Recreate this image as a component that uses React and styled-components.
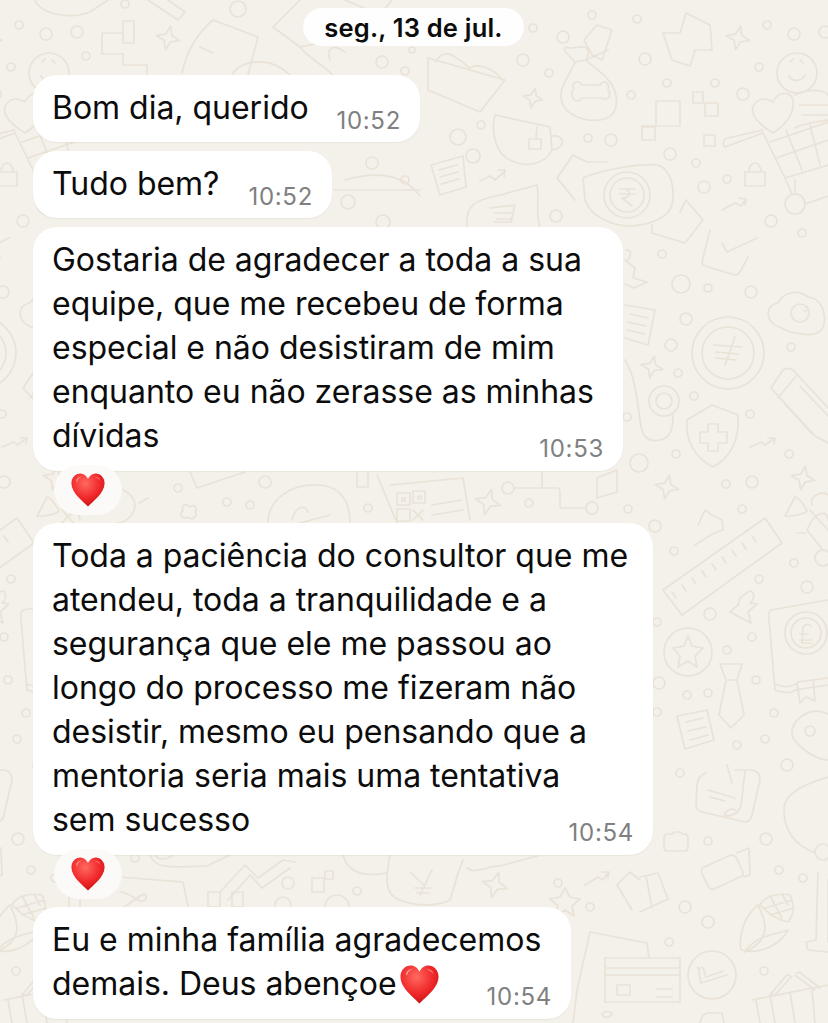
import React from "react";
import styled, { createGlobalStyle } from "styled-components";

const Global = createGlobalStyle`
  html, body { margin: 0; padding: 0; background: #f4f0ea; }
  #root { width: 828px; height: 1023px; overflow: hidden; }
`;

const Page = styled.main`
  position: relative;
  width: 828px;
  height: 1023px;
  overflow: hidden;
  background: #f4f0ea;
  font-family: Inter, "Liberation Sans", sans-serif;
  color: #0c0c0c;
`;

const Wallpaper = styled.svg`
  position: absolute;
  inset: 0;
  width: 828px;
  height: 1023px;
  fill: none;
  stroke: #e9e2d7;
  stroke-width: 1.7;
  stroke-linecap: round;
  stroke-linejoin: round;
  filter: blur(0.4px);
`;

const Thread = styled.div`
  position: relative;
  display: flex;
  flex-direction: column;
  align-items: flex-start;
  gap: 9px;
  padding: 8px 0 0 33px;
`;

const DateChip = styled.div`
  align-self: flex-start;
  margin: 0 0 20px 270px;
  width: 221px;
  height: 38px;
  border-radius: 19px;
  background: rgba(255, 255, 255, 0.93);
  display: flex;
  align-items: center;
  justify-content: center;
  font-size: 25.5px;
  font-weight: 600;
  letter-spacing: 0.2px;
`;

const Bubble = styled.div`
  box-sizing: border-box;
  width: ${(p) => p.$width}px;
  padding: ${(p) => (p.$single ? "11px 19px 12px" : "11px 19px 13px")};
  border-radius: 24px;
  background: #fff;
  box-shadow: 0 1px 1px rgba(120, 110, 90, 0.08);
  font-size: 32px;
  line-height: 44px;
  letter-spacing: -0.02px;
`;

const Line = styled.div`
  white-space: nowrap;
`;

const LastRow = styled.div`
  display: flex;
  justify-content: space-between;
  align-items: flex-end;
  white-space: nowrap;
`;

const InlineGroup = styled.span`
  display: inline-flex;
  align-items: center;
  gap: 3px;
`;

const Time = styled.span`
  font-size: 24px;
  line-height: 24px;
  letter-spacing: 0.7px;
  color: #808080;
  margin-bottom: -3px;
`;

const Reaction = styled.div`
  position: relative;
  z-index: 1;
  width: 68px;
  height: 50px;
  margin: -15px 0 -1px 21px;
  border-radius: 25px;
  background: #fbfaf8;
  display: flex;
  align-items: center;
  justify-content: center;
`;

const HeartSvg = styled.svg`
  display: block;
  flex: none;
  width: ${(p) => p.$size}px;
  height: ${(p) => p.$size}px;
`;

const Heart = ({ size, id }) => (
  <HeartSvg $size={size} viewBox="0 0 32 32">
    <defs>
      <radialGradient id={id} cx="0.42" cy="0.3" r="0.8">
        <stop offset="0" stopColor="#ff6a60" />
        <stop offset="0.55" stopColor="#f0282a" />
        <stop offset="1" stopColor="#bd0f10" />
      </radialGradient>
    </defs>
    <path
      d="M16 31.6C11.5 26.6.4 19 .4 9.6.4 4.2 4.2.4 8.8.4c3.2 0 5.8 2 7.2 5.2C17.4 2.4 20 .4 23.2.4c4.6 0 8.4 3.8 8.4 9.2 0 9.4-11.1 17-15.6 22z"
      fill={`url(#${id})`}
    />
    <path d="M5 7c1-2.4 3-3.6 5-3.4C7.8 4.4 6.4 5.8 5.8 8.4 5.4 8.6 4.9 8 5 7z" fill="#ffb0a8" opacity="0.8" />
    <path d="M22 3.6c2.6-.4 5 1 5.6 3.8-1.4-1.8-3.2-2.8-5.6-3.8z" fill="#ff9d94" opacity="0.7" />
  </HeartSvg>
);

const spark = (cx, cy, r, rot = 12) => {
  const p = [];
  for (let i = 0; i < 8; i++) {
    const a = ((rot + i * 45) * Math.PI) / 180;
    const rr = i % 2 ? r * 0.38 : r;
    p.push(`${(cx + Math.cos(a) * rr).toFixed(1)} ${(cy + Math.sin(a) * rr).toFixed(1)}`);
  }
  return `M${p.join("L")}Z`;
};

const circles = [
  [86,56,4],[125,4,4],[238,9,8],[382,62,6],[405,71,4],[412,50,3],[372,163,6],[405,180,4],[348,202,7],[383,222,7],
  [533,28,4],[563,37,6],[592,15,4],[637,19,4],[645,59,6],[523,60,6],[549,73,4],[667,83,4],[715,83,4],[631,95,4],
  [743,94,6],[767,25,4],[794,34,6],[825,32,6],[759,67,4],[458,137,8],[481,125,4],[473,156,7],[588,138,4],[611,140,6],
  [670,154,6],[696,163,4],[704,187,6],[727,179,4],[556,216,6],[771,221,6],[802,233,4],[662,254,4],
  [681,284,9],[708,288,4],[751,292,6],[686,319,6],[671,345,6],[791,347,4],[678,373,4],[694,396,4],[750,414,4],[627,417,4],
  [676,454,4],[789,454,4],[639,463,9],[752,482,6],[726,484,4],[628,509,4],[742,509,4],[655,526,6],
  [674,551,4],[794,563,4],[807,587,6],[759,579,4],[710,614,6],[752,637,4],[727,650,4],[657,622,4],[756,680,4],[659,683,6],
  [687,695,4],[708,693,4],[657,712,4],[774,713,4],[765,739,4],[737,745,4],[787,765,6],[680,773,4],
  [708,841,4],[766,839,6],[779,870,4],[803,878,4],[685,907,6],[708,922,6],[669,942,4],[764,971,4],
  [178,488,4],[265,482,6],[227,502,4],[250,505,4],[368,508,4],[529,503,4],[508,488,6],[592,508,6],
  [135,858,4],[288,883,6],[357,891,4],[558,883,4],[590,907,4],[283,905,8],[337,907,12],
  [795,204,10],[728,353,36],[728,353,26],[664,401,15],[664,401,8],[688,652,24],[806,633,21],[806,633,15],[810,731,5],
  [823,558,8],[800,313,9],[712,975,24],[823,852,8],[627,195,23],[627,195,17],[797,73,20],
];

const paths = [
  "M35 0C40 14 70 20 90 12L108 0","M148 0L178 20L185 12L168 0","M102 33H123V21H134V43H123V33M102 33V54H123V65H147V75",
  spark(168,38,12),"M182 73C186 55 195 35 213 20L258 37L248 75","M200 47L213 53","M232 75C240 60 270 55 290 75",
  "M273 27L300 0M273 27L300 47L325 42","M345 0L380 15L392 0","M330 60C326 50 332 42 345 52",
  "M300 47C310 60 320 62 333 75","M335 190H420M345 180C380 170 405 176 420 196",
  "M428 58L505 80L480 112L428 90Z","M436 62C440 52 450 52 456 58C462 60 466 66 470 68C478 62 496 70 502 80",
  "M575 62C570 75 560 85 561 97C562 115 585 122 600 120C618 118 620 100 612 85C605 73 590 65 586 60",
  "M575 62C568 55 562 50 566 47C572 50 578 46 585 47C590 50 588 58 586 60Z",
  "M574 88C570 84 578 78 582 85H600C604 78 610 84 608 90C612 94 608 102 602 98H582C576 106 568 96 574 88Z",
  "M597 25L612 30L602 60L592 55L584 40ZM586 60L608 50",
  "M663 33L680 33L686 13L710 25L712 50L695 50L690 66L672 60Z",spark(738,38,12),spark(533,98,10),
  "M495 115L550 127L552 150C545 165 525 168 510 160C498 155 490 135 495 115Z","M529 139H541V149H529ZM536 139L537 127",
  "M552 136C565 134 567 148 552 150",
  "M642 127H655V140H642ZM656 126V101H680V126H642","M693 92H703V103H693ZM705 103H718V116H705ZM704 135H715V146H704Z",
  "M789 76c3 6 13 6 16-1M790 62l3-3M800 60l3 3",
  "M773 133C760 125 750 115 753 107C757 98 765 97 773 102C777 92 790 90 793 100C795 115 785 125 773 133Z",
  "M795 95C810 88 825 90 828 95M795 128C800 125 815 122 828 120M800 105H828M802 115H828",
  "M725 147L763 133M725 147C722 143 724 138 728 138L763 130","M763 133L785 178L828 165M770 142L828 122M776 158L828 140M786 130L802 170M810 125L820 165",
  "M785 178L792 194M795 194V180M805 204L828 196",
  "M745 172H765V186H745ZM749 172C749 160 761 160 761 172",
  "M431 165L463 156L466 187L440 195ZM439 170L457 165M440 177L458 172M441 184L459 179",
  "M480 181L490 176L495 180L505 171M498 170L505 170L504 177","M722 210L735 203L741 206L746 199M739 198L746 199L745 205",
  "M583 178C600 170 640 163 658 165C672 170 675 190 672 205C668 218 650 225 630 226C610 226 590 215 585 200Z",
  "M620 189H635M620 194H635M624 189C632 190 631 198 622 198L632 206",
  "M557 178L573 155L587 162H607M557 178L575 200",
  "M652 225V233L685 243L703 220L686 200L680 212",
  "M467 227C465 205 475 200 500 195L537 185C540 200 535 215 540 227",
  "M490 208L515 205L511 222H494M495 213H513M497 219H512",
  "M710 230L702 262Q702 265 705 266L735 275Q738 275 740 272L748 257","M722 243L727 252L757 238",
  "M625 260L635 268L633 278L647 282L634 288L625 284","M626 262C632 256 632 250 626 250",
  "M625 305L655 310L648 345L625 338M630 314L648 318M628 322L646 326M627 330L644 334",spark(652,367,11),spark(667,487,12),spark(803,478,12),
  "M775 325C765 318 766 305 778 303C785 290 800 290 808 297C820 298 826 310 824 325C820 338 805 335 790 332Z","M806 306L809 310L804 311",
  "M735 337L725 365M714 345L742 347M716 352L738 354M716 358L736 360",
  "M771 388L783 370Q790 366 795 372L828 408M771 388L815 436L828 443M778 398L796 376M800 386L828 416M785 404L812 434",
  "M687 420L712 405L738 415C740 440 730 458 713 467C695 458 685 440 687 420Z",
  "M708 424H718V432H727V443H718V451H708V443H700V432H708Z",
  "M750 447L762 442L765 445L775 438M768 438H775L774 444",
  "M625 360C635 375 637 400 640 420C642 440 650 442 660 440C672 438 673 425 673 415",
  "M785 516L795 497C799 497 805 507 807 511C805 514 790 517 785 516Z","M812 505C808 495 825 490 828 495M810 510L828 530",
  "M698 525L705 510L712 515L722 520L723 530L712 534L695 545",
  "M663 590L765 518L782 543L682 615Z","M672 592L676 598M682 585L686 591M692 578L696 584M702 571L706 577M712 564L716 570M722 557L726 563M732 550L736 556M742 543L746 549M752 536L756 542",
  "M740 598L748 592C755 588 755 600 750 603L757 604L748 612L751 623L730 612L738 605Z",
  "M688 636L692 646L703 648L695 656L697 667L688 661L678 667L680 656L673 648L684 646Z",
  "M720 664L742 664L737 680L744 715L731 728L719 715L726 680ZM726 680H737",
  "M677 716L707 710L714 740L685 749ZM686 722L703 718M688 731L706 727M690 740L708 735",
  "M771 610L828 600M771 610Q768 612 769 620L775 690Q790 695 795 690L828 685M775 684Q790 690 798 682L828 678",
  "M797 683L800 703L806 697L815 701L813 680","M800 640H812M811 626C806 622 802 626 803 632L802 643H812M800 634H808",
  "M828 714C810 705 790 720 792 735C795 745 815 760 828 760",
  "M807 530C815 510 828 510 828 520M797 533H806M807 530L823 550",
  "M706 773Q698 775 697 785L696 805Q696 810 702 812L745 822Q750 822 752 815L760 780Q760 770 750 770L735 770",
  "M708 790L735 798M710 797L725 801M727 765L732 783M745 771L741 806Q738 816 725 816","M724 816C726 810 732 806 738 812",
  "M664 838Q664 834 668 834H672L675 832H680L682 834H684Q688 834 688 838V847Q688 851 684 851H668Q664 851 664 847Z",
  "M702 868L731 855Q735 855 737 859L743 872Q744 876 740 877L714 889Q710 890 708 886L702 874Q701 870 702 868ZM737 853L749 848L750 875L744 877",
  "M640 877L658 873L668 899L640 912M646 876L652 908",
  "M741 950C738 935 745 915 758 905C768 925 770 940 745 952M742 950C760 955 780 945 788 930C775 935 755 935 745 952",
  "M760 905C765 895 780 893 790 895C795 905 794 915 788 922C778 920 770 915 760 905ZM770 896L782 918M782 894L788 905M765 908L792 900M770 915L794 908",
  "M605 958H680V1002H605ZM605 968H680M605 975H680M617 985H630V995H617ZM657 989H672M657 997H672",
  "M590 932L577 990L573 1023M590 932L647 943L649 958M620 938L633 940",
  "M602 1014C606 1010 612 1012 612 1014C610 1018 603 1018 602 1014Z",
  "M698 967L701 983L727 975M699 969C702 966 704 968 704 971L706 977L723 971",
  "M752 1000L828 985M756 1000L760 1023M770 995L775 1023M790 992L795 1023M812 990L815 1023",
  "M770 995L785 977Q789 973 791 977L775 995ZM795 975L815 990M797 973Q800 971 803 975L820 988",
  "M828 777C800 785 783 795 784 810C784 830 795 845 815 853",
  "M818 872L816 940L806 942L808 950L828 952M828 880V942",
  "M700 1023C702 1013 706 1013 712 1013H722L724 1023",
  "M190 472L197 488L245 472","M183 510C180 505 187 503 190 507C194 503 198 508 195 512C198 516 192 521 188 517C184 520 178 516 183 510Z",
  "M135 505C135 515 125 523 118 523M105 485C120 485 135 495 135 505M148 498L139 503",
  "M268 523C268 500 290 483 320 485C340 487 350 500 350 523M292 520C296 505 305 505 308 512M330 515L300 523",
  "M357 472V487H368V472","M377 475L397 523M390 485L463 478L470 520",
  "M397 493H410V505H397ZM413 491H425V503H413ZM397 509H410V521H397ZM402 498H405V501H402ZM418 496H421V499H418Z",
  "M432 505L462 500M432 515L463 510M413 510L423 520M423 510L413 520",spark(488,502,13,15),
  "M514 488H557Q560 488 560 492V506Q560 508 563 508H586M542 472V488M597 478L617 470L617 492L597 498Z",
  "M150 855C155 868 165 868 207 866L230 855M155 855C160 862 170 858 172 855",
  "M120 877L183 882L188 907M120 892C130 892 140 905 145 900C148 896 146 892 140 896L120 910",
  "M220 892L245 865L258 878L283 860L295 862M228 900L250 875L262 888L290 868",
  "M312 878H324V892H312ZM325 871H333V879H325Z",
  "M390 855C385 880 385 895 400 900C420 908 440 905 450 900C455 885 458 870 463 860",
  "M432 870L420 895M410 872L424 885M415 888H432M417 893H430","M343 855C347 870 360 878 387 873",
  "M467 868C475 875 490 865 500 866L537 856",spark(495,885,13,15),"M565 888L570 897L580 899L572 906L574 916L565 910L556 916L558 906L550 899L560 897Z",
  "M585 885L598 877L603 880L608 873M602 872H609L608 878","M617 885L630 872L640 880M617 885L632 910",
  "M208 892H220V907H208ZM232 892H243V907H232Z",
];

const Doodles = () => (
  <>
    {circles.map(([cx, cy, r], i) => (
      <circle key={`c${i}`} cx={cx} cy={cy} r={r} />
    ))}
    {paths.map((d, i) => (
      <path key={`p${i}`} d={d} />
    ))}
  </>
);

export default function App() {
  return (
    <Page>
      <Global />
      <Wallpaper viewBox="0 0 828 1023" aria-hidden="true">
        <Doodles />
        <g transform="translate(-748 0)">
          <Doodles />
        </g>
      </Wallpaper>
      <Thread>
        <DateChip>seg., 13 de jul.</DateChip>
        <Bubble $width={387} $single>
          <LastRow>
            <span>Bom dia, querido</span>
            <Time>10:52</Time>
          </LastRow>
        </Bubble>
        <Bubble $width={299} $single>
          <LastRow>
            <span>Tudo bem?</span>
            <Time>10:52</Time>
          </LastRow>
        </Bubble>
        <Bubble $width={590}>
          <Line>Gostaria de agradecer a toda a sua</Line>
          <Line>equipe, que me recebeu de forma</Line>
          <Line>especial e não desistiram de mim</Line>
          <Line>enquanto eu não zerasse as minhas</Line>
          <LastRow>
            <span>dívidas</span>
            <Time>10:53</Time>
          </LastRow>
        </Bubble>
        <Reaction>
          <Heart size={34} id="heart-a" />
        </Reaction>
        <Bubble $width={620}>
          <Line>Toda a paciência do consultor que me</Line>
          <Line>atendeu, toda a tranquilidade e a</Line>
          <Line>segurança que ele me passou ao</Line>
          <Line>longo do processo me fizeram não</Line>
          <Line>desistir, mesmo eu pensando que a</Line>
          <Line>mentoria seria mais uma tentativa</Line>
          <LastRow>
            <span>sem sucesso</span>
            <Time>10:54</Time>
          </LastRow>
        </Bubble>
        <Reaction>
          <Heart size={34} id="heart-b" />
        </Reaction>
        <Bubble $width={538}>
          <Line>Eu e minha família agradecemos</Line>
          <LastRow>
            <InlineGroup>
              demais. Deus abençoe
              <Heart size={39} id="heart-c" />
            </InlineGroup>
            <Time>10:54</Time>
          </LastRow>
        </Bubble>
      </Thread>
    </Page>
  );
}
